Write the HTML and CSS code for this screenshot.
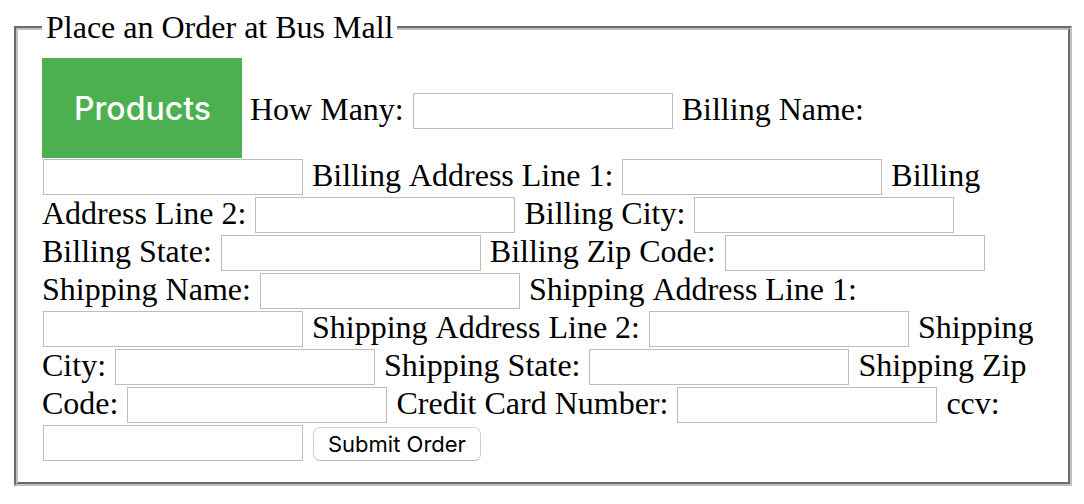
FILE: index.html
```html
<!DOCTYPE html>
<html lang="en">
<head>
<meta charset="utf-8">
<title>Bus Mall</title>
<link rel="stylesheet" href="styles.css">
</head>
<body>
<form class="order">
<fieldset class="order-box">
<legend class="order-title">Place an Order at Bus Mall</legend>
<button class="products" type="button">Products</button>
<label for="qty">How Many:</label>
<input class="field" id="qty" type="text">
<label for="bname">Billing Name:</label>
<input class="field" id="bname" type="text">
<label for="baddr1">Billing Address Line 1:</label>
<input class="field" id="baddr1" type="text">
<label for="baddr2">Billing Address Line 2:</label>
<input class="field" id="baddr2" type="text">
<label for="bcity">Billing City:</label>
<input class="field" id="bcity" type="text">
<label for="bstate">Billing State:</label>
<input class="field" id="bstate" type="text">
<label for="bzip">Billing Zip Code:</label>
<input class="field" id="bzip" type="text">
<label for="sname">Shipping Name:</label>
<input class="field" id="sname" type="text">
<label for="saddr1">Shipping Address Line 1:</label>
<input class="field" id="saddr1" type="text">
<label for="saddr2">Shipping Address Line 2:</label>
<input class="field" id="saddr2" type="text">
<label for="scity">Shipping City:</label>
<input class="field" id="scity" type="text">
<label for="sstate">Shipping State:</label>
<input class="field" id="sstate" type="text">
<label for="szip">Shipping Zip Code:</label>
<input class="field" id="szip" type="text">
<label for="card">Credit Card Number:</label>
<input class="field" id="card" type="text">
<label for="ccv">ccv:</label>
<input class="field" id="ccv" type="text">
<button class="submit" type="submit">Submit Order</button>
</fieldset>
</form>
</body>
</html>
```
FILE: styles.css
```css
body {
  margin: 0;
  padding: 9px 12px 18px 14px;
  background: #fff;
  color: #000;
  font-family: "Liberation Serif", "Times New Roman", serif;
  font-size: 32px;
  font-kerning: none;
  line-height: 32px;
}

.order-box {
  margin: 0;
  padding: 11px 24px 20px;
  border: 4px groove #c0c0c0;
}

.order-title {
  padding: 0 4px 2px;
  line-height: 36px;
}

.products {
  padding: 33px 31px 31px 32px;
  border: 0;
  background: #4caf50;
  color: #fff;
  font-family: Inter, sans-serif;
  font-size: 32px;
  font-weight: 500;
  line-height: 36px;
}

.field {
  box-sizing: border-box;
  width: 260px;
  height: 36px;
  margin: 1px;
  padding: 3px 2px 1px;
  border: 1px solid #bdbdbd;
  background: #fff;
  font-family: Inter, sans-serif;
  font-size: 22px;
  line-height: 30px;
}

.submit {
  height: 34px;
  margin: 0 1px;
  padding: 0 14px;
  border: 1px solid #d0d0d0;
  border-bottom-color: #b8b8b8;
  border-radius: 7px;
  background: #fff;
  color: #000;
  font-family: Inter, sans-serif;
  font-size: 22px;
  line-height: 30px;
}
```
